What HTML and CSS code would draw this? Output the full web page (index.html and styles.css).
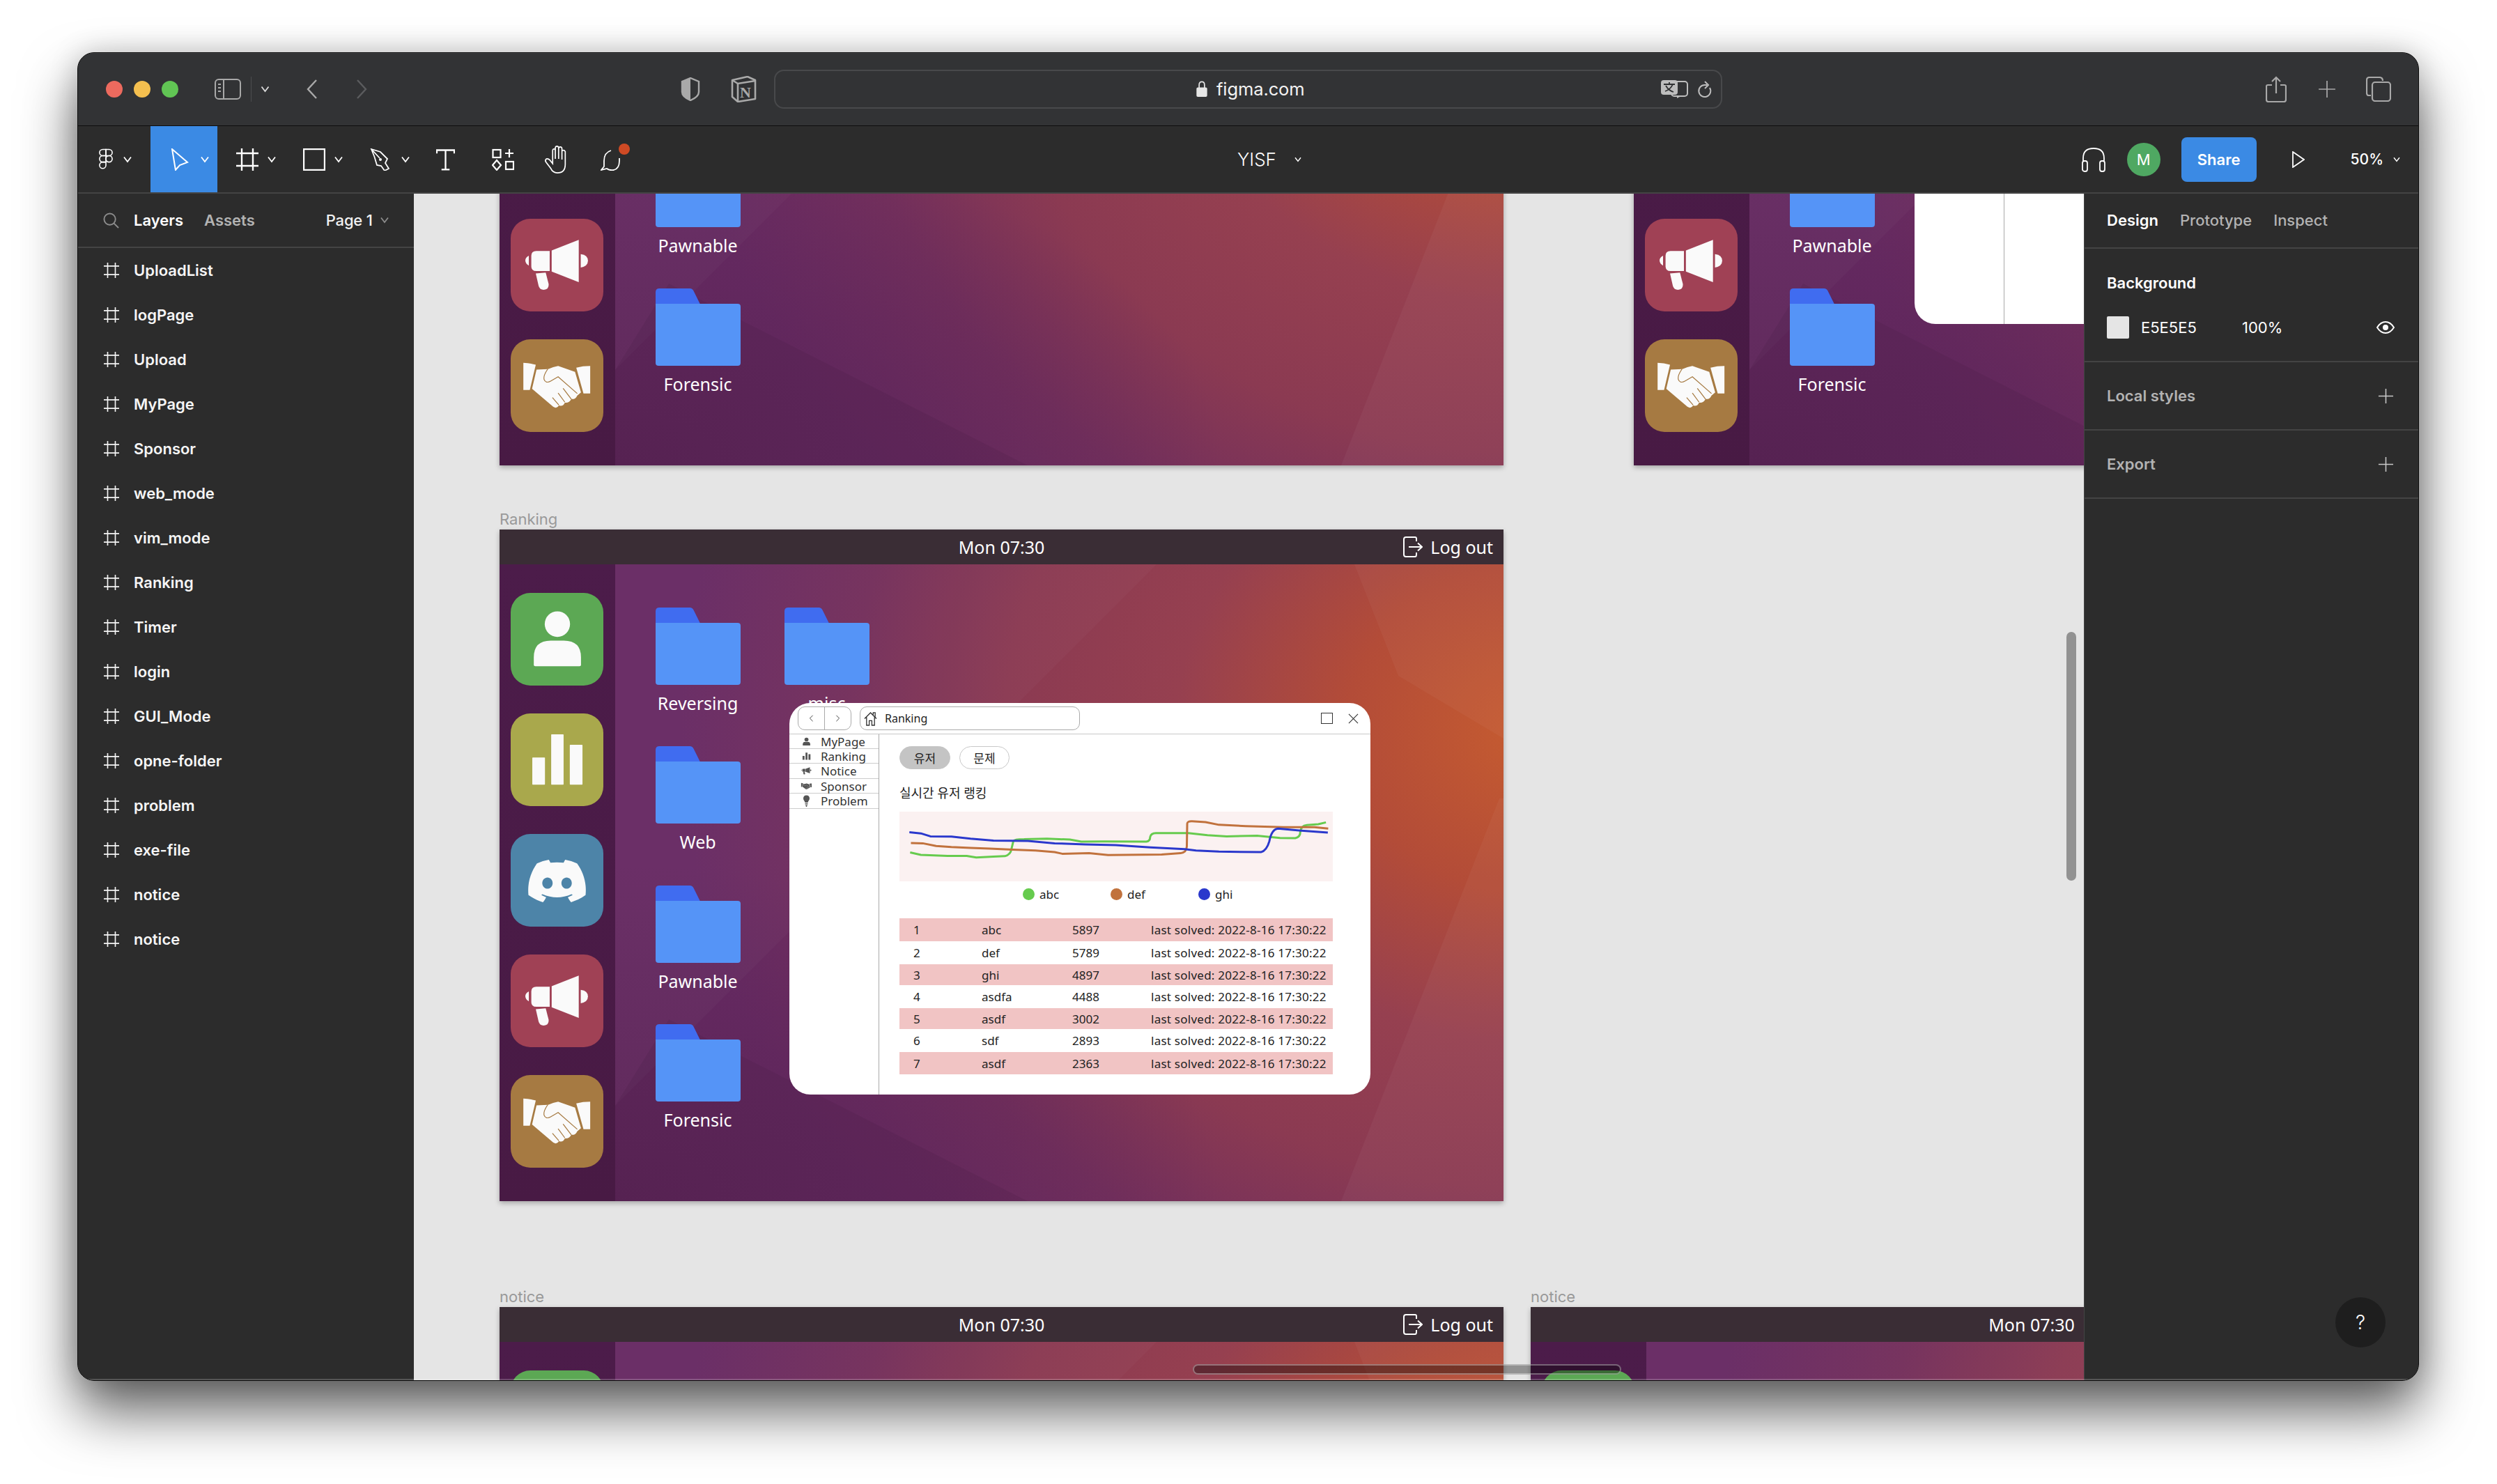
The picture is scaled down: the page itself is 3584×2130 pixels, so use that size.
FILE: index.html
```html
<!DOCTYPE html>
<html lang="en">
<head>
<meta charset="utf-8">
<title>YISF - Figma</title>
<link rel="stylesheet" href="styles.css">
</head>
<body>
<svg class="defs" aria-hidden="true">
  <symbol id="chev" viewBox="0 0 12 10"><path d="M1 1.5 L6 8 L11 1.5" fill="none" stroke="currentColor" stroke-width="1.8"/></symbol>
  <symbol id="frame" viewBox="0 0 32 32"><path d="M8 0V32M24 0V32M0 7H32M0 25H32" fill="none" stroke="currentColor" stroke-width="2.4"/></symbol>
  <symbol id="plus" viewBox="0 0 24 24"><path d="M12 1V23M1 12H23" fill="none" stroke="currentColor" stroke-width="1.6"/></symbol>
  <symbol id="person" viewBox="64 333 373 398" preserveAspectRatio="none"><ellipse cx="252" cy="467" rx="51" ry="55"/><path d="M157 642V610Q157 538 225 538H278Q347 538 347 610V642Q347 648 341 648H163Q157 648 157 642Z"/></symbol>
  <symbol id="bars" viewBox="64 852 373 398" preserveAspectRatio="none"><rect x="151" y="1041" width="51" height="117" rx="2"/><rect x="227" y="942" width="50" height="216" rx="2"/><rect x="302" y="987" width="51" height="171" rx="2"/></symbol>
  <symbol id="discord" viewBox="-7.3 -8.3 38.6 40" preserveAspectRatio="none"><path d="M20.317 4.3698a19.7913 19.7913 0 00-4.8851-1.5152.0741.0741 0 00-.0785.0371c-.211.3753-.4447.8648-.6083 1.2495-1.8447-.2762-3.68-.2762-5.4868 0-.1636-.3933-.4058-.8742-.6177-1.2495a.077.077 0 00-.0785-.037 19.7363 19.7363 0 00-4.8852 1.515.0699.0699 0 00-.0321.0277C.5334 9.0458-.319 13.5799.0992 18.0578a.0824.0824 0 00.0312.0561c2.0528 1.5076 4.0413 2.4228 5.9929 3.0294a.0777.0777 0 00.0842-.0276c.4616-.6304.8731-1.2952 1.226-1.9942a.076.076 0 00-.0416-.1057c-.6528-.2476-1.2743-.5495-1.8722-.8923a.077.077 0 01-.0076-.1277c.1258-.0943.2517-.1923.3718-.2914a.0743.0743 0 01.0776-.0105c3.9278 1.7933 8.18 1.7933 12.0614 0a.0739.0739 0 01.0785.0095c.1202.099.246.1981.3728.2924a.077.077 0 01-.0066.1276 12.2986 12.2986 0 01-1.873.8914.0766.0766 0 00-.0407.1067c.3604.698.7719 1.3628 1.225 1.9932a.076.076 0 00.0842.0286c1.961-.6067 3.9495-1.5219 6.0023-3.0294a.077.077 0 00.0313-.0552c.5004-5.177-.8382-9.6739-3.5485-13.6604a.061.061 0 00-.0312-.0286zM8.02 15.3312c-1.1825 0-2.1569-1.0857-2.1569-2.419 0-1.3332.9555-2.4189 2.157-2.4189 1.2108 0 2.1757 1.0952 2.1568 2.419 0 1.3332-.9555 2.4189-2.1569 2.4189zm7.9748 0c-1.1825 0-2.1569-1.0857-2.1569-2.419 0-1.3332.9554-2.4189 2.1569-2.4189 1.2108 0 2.1757 1.0952 2.1568 2.419 0 1.3332-.946 2.4189-2.1568 2.4189Z"/></symbol>
  <symbol id="horn" viewBox="64 552 373 386" preserveAspectRatio="none"><path d="M229 684L338 640V816L229 772Z"/><path d="M167 686H221V770H167Q147 770 147 750V706Q147 686 167 686Z"/><path d="M137 706Q122 715 123 727Q124 740 137 747Z"/><path d="M346 699Q375 703 375 727Q375 750 346 755Z"/><path d="M165 780L205 776L217 825Q218 847 197 848Q180 848 176 830Z"/></symbol>
  <symbol id="shake" viewBox="64 1054 373 386" preserveAspectRatio="none"><path d="M115 1152Q140 1153 165 1160L141 1265H115Z"/><path d="M384 1165Q355 1165 328 1172L357 1280H384Z"/><path d="M168 1180L150 1260L235 1335Q250 1345 258 1330Q275 1335 282 1318Q300 1320 308 1303Q325 1305 332 1288L347 1275L323 1190L255 1165L235 1170L215 1178Z"/><path d="M213 1178Q195 1205 198 1220Q205 1240 225 1228L255 1210L332 1280M232 1297L258 1328M255 1278L282 1316M275 1258L308 1303" fill="none" stroke="var(--line)" stroke-width="3.5"/></symbol>
  <symbol id="bulb" viewBox="0 0 20 36"><path d="M10 1C4 1 1 5 1 10C1 15 5 17 6 22H14C15 17 19 15 19 10C19 5 16 1 10 1ZM6 24H14V27H6ZM7 29H13L11 34H9Z"/></symbol>
  <symbol id="folder" viewBox="646 396 341 332" preserveAspectRatio="none"><path fill="#406cf0" d="M646 412Q646 396 662 396H783Q794 396 799 408L825 464H646Z"/><path fill="#5594f7" d="M646 462H975Q987 462 987 474V716Q987 728 975 728H658Q646 728 646 716Z"/></symbol>
  <symbol id="logout" viewBox="0 0 28 30"><path d="M17 1H4Q1 1 1 4V26Q1 29 4 29H17Q19 29 19 26V23M19 7V3Q19 1 17 1M8 15H27M21 9.500L27 15L21 20.500" fill="none" stroke="currentColor" stroke-width="2"/></symbol>
  <symbol id="facets" viewBox="0 0 1441 964" preserveAspectRatio="none"><path fill="#fff" fill-opacity=".025" d="M0 50H943L0 993Z"/><path fill="#fff" fill-opacity=".035" d="M1227 50H1441V300L1290 210Z"/><path fill="#fff" fill-opacity=".04" d="M1435 386H1441V964H1208Z"/><path fill="#000" fill-opacity=".05" d="M243 703L758 964H166V827Z"/></symbol>
</svg>

<div class="window">
  <header class="titlebar">
    <span class="light light-red"></span><span class="light light-yellow"></span><span class="light light-green"></span>
    <svg class="tb-sidebar" viewBox="0 0 38 30"><rect x="1" y="1" width="36" height="28" rx="5" fill="none" stroke="#a9a9a9" stroke-width="2"/><path d="M13 1V29" stroke="#a9a9a9" stroke-width="2"/><path d="M5 8H9M5 13H9M5 18H9" stroke="#a9a9a9" stroke-width="1.8"/></svg>
    <span class="tb-sep"></span>
    <svg class="tb-chev"><use href="#chev"/></svg>
    <svg class="tb-back" viewBox="0 0 18 30"><path d="M15 2L3 15L15 28" fill="none" stroke="#a9a9a9" stroke-width="2.4"/></svg>
    <svg class="tb-forward" viewBox="0 0 18 30"><path d="M3 2L15 15L3 28" fill="none" stroke="#5b5c5e" stroke-width="2.4"/></svg>
    <svg class="tb-shield" viewBox="0 0 28 34"><path d="M14 1L26 6V21Q26 28 14 33Q2 28 2 21V6Z" fill="none" stroke="#a9a9a9" stroke-width="2.4"/><path d="M14 1L2 6V21Q2 28 14 33Z" fill="#a9a9a9"/></svg>
    <svg class="tb-notion" viewBox="0 0 38 38"><path d="M3 6L25 1L36 6V33L11 37L3 30Z" fill="#2f3032" stroke="#a9a9a9" stroke-width="2.6" stroke-linejoin="round"/><path d="M3 6L11 11L36 7" fill="none" stroke="#a9a9a9" stroke-width="2.6"/><path d="M11 11V37" stroke="#a9a9a9" stroke-width="2.6"/><text x="14" y="31" class="notion-n">N</text></svg>
    <div class="addressbar">
      <svg class="lock" viewBox="0 0 16 24"><path d="M4 11V6Q4 1.500 8 1.500Q12 1.500 12 6V11" fill="none" stroke="#e6e6e6" stroke-width="1.800"/><rect y="10" width="16" height="14" rx="2" fill="#e6e6e6"/></svg>
      <span class="host">figma.com</span>
      <svg class="translate" viewBox="0 0 40 28"><rect x="16" y="3" width="23" height="21" rx="4" fill="none" stroke="#bdbdbd" stroke-width="2"/><rect x="1" y="1" width="24" height="21" rx="4" fill="#bdbdbd"/><path d="M5 7H21M13 4V7M7 17Q15 14 18 7M8 9Q12 16 19 18" fill="none" stroke="#2f3032" stroke-width="1.800"/><path d="M24 27L30 24H24Z" fill="#bdbdbd"/></svg>
      <svg class="reload" viewBox="0 0 22 26"><path d="M18 11A8.500 8.500 0 1 1 11 7H14" fill="none" stroke="#bdbdbd" stroke-width="2"/><path d="M11 2L16 7L11 12" fill="none" stroke="#bdbdbd" stroke-width="2"/></svg>
    </div>
    <svg class="tb-share" viewBox="0 0 30 38"><path d="M9 13H3Q1 13 1 15V34Q1 37 4 37H26Q29 37 29 34V15Q29 13 27 13H21" fill="none" stroke="#a9a9a9" stroke-width="2.200"/><path d="M15 25V2M9 8L15 2L21 8" fill="none" stroke="#a9a9a9" stroke-width="2.200"/></svg>
    <svg class="tb-plus"><use href="#plus"/></svg>
    <svg class="tb-tabs" viewBox="0 0 36 36"><path d="M7 27H4Q1 27 1 23V5Q1 1 5 1H19Q24 1 24 6" fill="none" stroke="#a9a9a9" stroke-width="2.200"/><rect x="9" y="8" width="26" height="27" rx="4" fill="none" stroke="#a9a9a9" stroke-width="2.200"/></svg>
  </header>

  <nav class="toolbar">
    <div class="tool tool-logo">
      <svg class="ic-logo" viewBox="0 0 22 34"><g fill="none" stroke="#fff" stroke-width="1.800"><path d="M11 1H6A5 5 0 0 0 6 11H11Z"/><path d="M11 1H16A5 5 0 0 1 16 11H11Z"/><path d="M11 11H6A5 5 0 0 0 6 21H11Z"/><circle cx="16" cy="16" r="5"/><path d="M11 21H6A5 5 0 1 0 11 26Z"/></g></svg>
      <svg class="chev"><use href="#chev"/></svg>
    </div>
    <div class="tool tool-move">
      <svg class="ic-arrow" viewBox="0 0 26 32"><path d="M2 1L24 20L13 24L7 31Z" fill="none" stroke="#fff" stroke-width="2"/></svg>
      <svg class="chev"><use href="#chev"/></svg>
    </div>
    <div class="tool tool-menu"><svg class="ic"><use href="#frame"/></svg><svg class="chev"><use href="#chev"/></svg></div>
    <div class="tool tool-menu"><svg class="ic" viewBox="0 0 32 32"><rect x="1" y="1" width="30" height="30" fill="none" stroke="#fff" stroke-width="2.400"/></svg><svg class="chev"><use href="#chev"/></svg></div>
    <div class="tool tool-menu"><svg class="ic" viewBox="0 0 32 32"><path d="M2 1L15 5L25 15L22 21L27 29L21 32L16 25L10 24Q7 12 2 1ZM2 1L14 14" fill="none" stroke="#fff" stroke-width="1.800"/><circle cx="15" cy="16" r="2" fill="#fff"/></svg><svg class="chev"><use href="#chev"/></svg></div>
    <div class="tool tool-plain w78"><svg class="ic-t" viewBox="0 0 28 32"><path d="M1 7V2H27V7M14 2V30M8 31H20" fill="none" stroke="#fff" stroke-width="2.400"/></svg></div>
    <div class="tool tool-plain w88"><svg class="ic" viewBox="0 0 32 32"><g fill="none" stroke="#fff" stroke-width="2.200"><rect x="1.500" y="2" width="11" height="11"/><path d="M25 1V13M19 7H31"/><path d="M7 17L13 24L7 31L1 24Z"/><rect x="20" y="19" width="11" height="11"/></g></svg></div>
    <div class="tool tool-plain w64"><svg class="ic-hand" viewBox="0 0 36 42"><path d="M13 22V8Q13 5 15 5T17 8V20V4Q17 1 19.500 1T22 4V20V5Q22 2 24.500 2T27 5V21V9Q27 7 29 7T32 9V28Q32 41 20 41Q13 41 10 34L3 25Q1 22 3.500 20Q6 19 9 22L13 27Z" fill="none" stroke="#fff" stroke-width="1.800"/></svg></div>
    <div class="tool tool-plain w96 tool-comment"><svg class="ic" viewBox="0 0 32 32"><path d="M15 3Q5 6 5 18V26L1 31L9 29Q13 32 19 31Q27 29 27 18V14" fill="none" stroke="#fff" stroke-width="1.800"/></svg><span class="comment-dot"></span></div>
    <div class="doc-title"><span>YISF</span><svg class="chev-small"><use href="#chev"/></svg></div>
    <div class="tb-right">
      <svg class="ic-phones" viewBox="0 0 36 36"><path d="M3 20V16Q3 2 18 2T33 16V20" fill="none" stroke="#fff" stroke-width="1.800"/><rect x="2" y="20" width="7" height="15" rx="3" fill="none" stroke="#fff" stroke-width="1.800"/><rect x="27" y="20" width="7" height="15" rx="3" fill="none" stroke="#fff" stroke-width="1.800"/></svg>
      <span class="avatar">M</span>
      <span class="share-btn">Share</span>
      <svg class="ic-play" viewBox="0 0 18 24"><path d="M1 1L17 12L1 23Z" fill="none" stroke="#fff" stroke-width="1.800"/></svg>
      <span class="zoom-val">50%</span>
      <svg class="chev-small"><use href="#chev"/></svg>
    </div>
  </nav>

  <div class="main">
    <aside class="left">
      <div class="left-head">
        <svg class="search" viewBox="0 0 24 24"><circle cx="10" cy="10" r="8.500" fill="none" stroke="#8c8c8c" stroke-width="2"/><path d="M16 16L23 23" stroke="#8c8c8c" stroke-width="2"/></svg>
        <span class="tab-on">Layers</span>
        <span class="tab-off">Assets</span>
        <span class="page-name">Page 1</span>
        <svg class="page-chev"><use href="#chev"/></svg>
      </div>
      <ul class="layers">
        <li><svg class="ic-frame"><use href="#frame"/></svg>UploadList</li>
        <li><svg class="ic-frame"><use href="#frame"/></svg>logPage</li>
        <li><svg class="ic-frame"><use href="#frame"/></svg>Upload</li>
        <li><svg class="ic-frame"><use href="#frame"/></svg>MyPage</li>
        <li><svg class="ic-frame"><use href="#frame"/></svg>Sponsor</li>
        <li><svg class="ic-frame"><use href="#frame"/></svg>web_mode</li>
        <li><svg class="ic-frame"><use href="#frame"/></svg>vim_mode</li>
        <li><svg class="ic-frame"><use href="#frame"/></svg>Ranking</li>
        <li><svg class="ic-frame"><use href="#frame"/></svg>Timer</li>
        <li><svg class="ic-frame"><use href="#frame"/></svg>login</li>
        <li><svg class="ic-frame"><use href="#frame"/></svg>GUI_Mode</li>
        <li><svg class="ic-frame"><use href="#frame"/></svg>opne-folder</li>
        <li><svg class="ic-frame"><use href="#frame"/></svg>problem</li>
        <li><svg class="ic-frame"><use href="#frame"/></svg>exe-file</li>
        <li><svg class="ic-frame"><use href="#frame"/></svg>notice</li>
        <li><svg class="ic-frame"><use href="#frame"/></svg>notice</li>
      </ul>
    </aside>

    <section class="canvas">
      <!-- frame: top left, only its lower part is in view -->
      <article class="frame frame-a">
        <svg class="facets"><use href="#facets"/></svg>
        <div class="topbar"></div>
        <div class="desk">
          <div class="dock">
            <span class="tile tile-green"><svg><use href="#person"/></svg></span>
            <span class="tile tile-olive"><svg><use href="#bars"/></svg></span>
            <span class="tile tile-blue"><svg><use href="#discord"/></svg></span>
            <span class="tile tile-red"><svg><use href="#horn"/></svg></span>
            <span class="tile tile-brown"><svg><use href="#shake"/></svg></span>
          </div>
          <div class="folders">
            <div class="folder"></div>
            <div class="folder"></div>
            <div class="folder"><svg><use href="#folder"/></svg><span>Pawnable</span></div>
            <div class="folder"><svg><use href="#folder"/></svg><span>Forensic</span></div>
          </div>
        </div>
      </article>

      <!-- frame: top right, only its lower part is in view -->
      <article class="frame frame-b">
        <svg class="facets"><use href="#facets"/></svg>
        <div class="topbar"></div>
        <div class="desk">
          <div class="dock">
            <span class="tile tile-green"><svg><use href="#person"/></svg></span>
            <span class="tile tile-olive"><svg><use href="#bars"/></svg></span>
            <span class="tile tile-blue"><svg><use href="#discord"/></svg></span>
            <span class="tile tile-red"><svg><use href="#horn"/></svg></span>
            <span class="tile tile-brown"><svg><use href="#shake"/></svg></span>
          </div>
          <div class="folders">
            <div class="folder"></div>
            <div class="folder"></div>
            <div class="folder"><svg><use href="#folder"/></svg><span>Pawnable</span></div>
            <div class="folder"><svg><use href="#folder"/></svg><span>Forensic</span></div>
          </div>
        </div>
        <div class="blank-modal"><span class="blank-line"></span></div>
      </article>

      <!-- frame: Ranking -->
      <article class="frame frame-r">
        <span class="frame-label">Ranking</span>
        <svg class="facets"><use href="#facets"/></svg>
        <div class="topbar"><span class="clock">Mon 07:30</span><span class="logout"><svg><use href="#logout"/></svg>Log out</span></div>
        <div class="desk">
          <div class="dock">
            <span class="tile tile-green"><svg><use href="#person"/></svg></span>
            <span class="tile tile-olive"><svg><use href="#bars"/></svg></span>
            <span class="tile tile-blue"><svg><use href="#discord"/></svg></span>
            <span class="tile tile-red"><svg><use href="#horn"/></svg></span>
            <span class="tile tile-brown"><svg><use href="#shake"/></svg></span>
          </div>
          <div class="folders">
            <div class="folder"><svg><use href="#folder"/></svg><span>Reversing</span></div>
            <div class="folder"><svg><use href="#folder"/></svg><span>Web</span></div>
            <div class="folder"><svg><use href="#folder"/></svg><span>Pawnable</span></div>
            <div class="folder"><svg><use href="#folder"/></svg><span>Forensic</span></div>
            <div class="folder"><svg><use href="#folder"/></svg><span>misc</span></div>
          </div>
        </div>

        <div class="modal">
          <div class="modal-head">
            <div class="nav-btns">
              <span class="nav-btn"><svg viewBox="0 0 10 16"><path d="M8 2L2 8L8 14" fill="none" stroke="#333" stroke-width="1.300"/></svg></span>
              <span class="nav-btn"><svg viewBox="0 0 10 16"><path d="M2 2L8 8L2 14" fill="none" stroke="#333" stroke-width="1.300"/></svg></span>
            </div>
            <div class="addr">
              <svg class="home" viewBox="0 0 20 22"><path d="M1 11L10 2L19 11M4 9V21H8V14H12V21H16V9M14 5V2H17V8" fill="none" stroke="#333" stroke-width="1.400"/></svg>
              <span>Ranking</span>
            </div>
            <span class="win-max"></span>
            <svg class="win-close" viewBox="0 0 16 16"><path d="M1 1L15 15M15 1L1 15" stroke="#333" stroke-width="1.200"/></svg>
          </div>
          <div class="modal-body">
            <ul class="side">
              <li class="side-a"><svg><use href="#person"/></svg>MyPage</li>
              <li class="side-b"><svg><use href="#bars"/></svg>Ranking</li>
              <li class="side-c"><svg><use href="#horn"/></svg>Notice</li>
              <li class="side-b"><svg><use href="#shake"/></svg>Sponsor</li>
              <li class="side-c"><svg class="bulb"><use href="#bulb"/></svg>Problem</li>
            </ul>
            <div class="content">
              <div class="pills"><span class="pill pill-on">유저</span><span class="pill">문제</span></div>
              <h2 class="chart-title">실시간 유저 랭킹</h2>
              <svg class="chart" viewBox="294 430 1134 260" preserveAspectRatio="none">
                <path class="line" stroke="#66cb4e" d="M322 582L350 591L420 595L470 595L495 601L540 598L570 596Q585 590 587 570L592 540Q595 533 620 533L680 531L740 534L770 542L830 541L940 542Q950 540 950 525Q952 510 965 510L1050 510L1100 518L1150 522L1230 520L1290 528L1330 529Q1343 525 1343 505Q1345 482 1360 480L1390 477L1410 470"/>
                <path class="line" stroke="#c1723d" d="M324 547L355 548L390 558L430 562L480 565L530 568L590 572L650 575L700 581L720 587L790 585L840 592L980 590L1030 585Q1045 582 1046 560L1047 475Q1047 465 1060 466L1095 469L1130 479L1200 484L1300 488L1380 488L1416 493"/>
                <path class="line" stroke="#2a38cc" d="M320 507L350 511L375 522L430 523L480 531L540 538L630 539L700 548L780 552L860 555L950 563L1040 570L1070 575L1130 579L1240 581Q1255 575 1262 540Q1268 495 1285 493L1340 500L1415 508"/>
              </svg>
              <div class="legend">
                <span class="key"><i class="dot dot-g"></i>abc</span>
                <span class="key"><i class="dot dot-o"></i>def</span>
                <span class="key"><i class="dot dot-b"></i>ghi</span>
              </div>
              <div class="table">
                <div class="row row-pink h33"><span>1</span><span>abc</span><span>5897</span><span class="solved">last solved: 2022-8-16 17:30:22</span></div>
                <div class="row h33"><span>2</span><span>def</span><span>5789</span><span class="solved">last solved: 2022-8-16 17:30:22</span></div>
                <div class="row row-pink h30"><span>3</span><span>ghi</span><span>4897</span><span class="solved">last solved: 2022-8-16 17:30:22</span></div>
                <div class="row h33"><span>4</span><span>asdfa</span><span>4488</span><span class="solved">last solved: 2022-8-16 17:30:22</span></div>
                <div class="row row-pink h30"><span>5</span><span>asdf</span><span>3002</span><span class="solved">last solved: 2022-8-16 17:30:22</span></div>
                <div class="row h33"><span>6</span><span>sdf</span><span>2893</span><span class="solved">last solved: 2022-8-16 17:30:22</span></div>
                <div class="row row-pink h32"><span>7</span><span>asdf</span><span>2363</span><span class="solved">last solved: 2022-8-16 17:30:22</span></div>
              </div>
            </div>
          </div>
        </div>
      </article>

      <!-- frames: notice -->
      <article class="frame frame-n1">
        <span class="frame-label">notice</span>
        <svg class="facets"><use href="#facets"/></svg>
        <div class="topbar"><span class="clock">Mon 07:30</span><span class="logout"><svg><use href="#logout"/></svg>Log out</span></div>
        <div class="desk"><div class="dock"><span class="tile tile-green"></span></div></div>
      </article>
      <article class="frame frame-n2">
        <span class="frame-label">notice</span>
        <svg class="facets"><use href="#facets"/></svg>
        <div class="topbar"><span class="clock">Mon 07:30</span></div>
        <div class="desk"><div class="dock"><span class="tile tile-green"></span></div></div>
      </article>

      <span class="scroll-v"></span>
      <span class="scroll-h"></span>
    </section>

    <aside class="right">
      <div class="right-head"><span class="tab-on">Design</span><span class="tab-off">Prototype</span><span class="tab-off">Inspect</span></div>
      <div class="bg-section">
        <h3 class="sec-title">Background</h3>
        <div class="bg-row">
          <span class="swatch"></span><span class="hex">E5E5E5</span><span class="pct">100%</span>
          <svg class="eye" viewBox="0 0 26 18"><path d="M1 9Q6 1 13 1T25 9Q20 17 13 17T1 9Z" fill="none" stroke="#fff" stroke-width="2"/><circle cx="13" cy="9" r="4" fill="#fff"/></svg>
        </div>
      </div>
      <div class="sec-row"><span>Local styles</span><svg><use href="#plus"/></svg></div>
      <div class="sec-row"><span>Export</span><svg><use href="#plus"/></svg></div>
      <span class="help">?</span>
    </aside>
  </div>
</div>
</body>
</html>
```

FILE: styles.css
```css
* { box-sizing: border-box; }
html, body { margin: 0; padding: 0; }
body {
  width: 3584px;
  height: 2130px;
  padding: 75px 112px 0 111px;
  background: #fff;
  overflow: hidden;
  font-family: Inter, "Liberation Sans", sans-serif;
}
.defs { position: absolute; width: 0; height: 0; }
ul { list-style: none; margin: 0; padding: 0; }
h2, h3 { margin: 0; font-weight: inherit; font-size: inherit; }

.window {
  position: relative;
  width: 3361px;
  height: 1907px;
  border: 1px solid #0c0c0c;
  border-radius: 24px;
  background: #2c2c2c;
  overflow: hidden;
}
body::before {
  content: "";
  position: absolute;
  left: 111px;
  top: 75px;
  width: 3361px;
  height: 1907px;
  border-radius: 24px;
  box-shadow: 0 44px 80px rgba(0, 0, 0, .62), 0 0 40px rgba(0, 0, 0, .18);
}
.window::after {
  content: "";
  position: absolute;
  left: 0;
  right: 0;
  bottom: 0;
  height: 2px;
  background: rgba(255, 255, 255, .2);
}

/* title bar */
.titlebar {
  height: 105px;
  display: flex;
  align-items: center;
  background: #323335;
  border-top: 1px solid #3e3f41;
  border-bottom: 1px solid #0d0d0d;
  padding: 0 0 2px 40px;
}
.light { width: 24px; height: 24px; border-radius: 50%; margin-right: 16px; }
.light-red { background: #ec6a5e; }
.light-yellow { background: #f4bf4f; }
.light-green { background: #61c554; }
.tb-sidebar { width: 38px; height: 30px; margin-left: 36px; }
.tb-sep { width: 1px; height: 36px; background: #4b4c4e; margin-left: 14px; }
.tb-chev { width: 13px; height: 10px; margin-left: 13px; color: #dcdcdc; }
.tb-back { width: 18px; height: 30px; margin-left: 52px; }
.tb-forward { width: 18px; height: 30px; margin-left: 53px; }
.tb-shield { width: 28px; height: 34px; margin-left: 449px; }
.tb-notion { width: 38px; height: 38px; margin-left: 43px; }
.notion-n { font: bold 22px "Liberation Serif", serif; fill: #a9a9a9; }
.addressbar {
  position: relative;
  width: 1361px;
  height: 56px;
  margin-left: 25px;
  border: 2px solid #48494b;
  border-radius: 14px;
  display: flex;
  align-items: center;
  padding-left: 604px;
  color: #f2f2f2;
}
.lock { width: 16px; height: 23px; }
.host { margin-left: 13px; font-size: 25.500px; letter-spacing: -.1px; line-height: 1; }
.translate { width: 40px; height: 28px; margin-left: 510px; }
.reload { width: 22px; height: 26px; margin-left: 13px; }
.tb-share { width: 30px; height: 38px; margin-left: 780px; }
.tb-plus { width: 26px; height: 26px; margin-left: 45px; color: #a9a9a9; }
.tb-tabs { width: 36px; height: 36px; margin-left: 43px; }

/* toolbar */
.toolbar {
  height: 97px;
  display: flex;
  align-items: stretch;
  background: #2c2c2c;
  border-bottom: 2px solid #444;
  color: #fff;
}
.tool { display: flex; align-items: center; color: #fff; }
.tool-logo { width: 104px; padding-left: 30px; gap: 15px; }
.tool-move { width: 96px; padding-left: 29px; gap: 17px; background: #3b8ae4; }
.tool-menu { width: 96px; padding-left: 27px; gap: 13px; }
.tool-plain { justify-content: center; }
.w78 { width: 78px; }
.w88 { width: 88px; }
.w64 { width: 64px; }
.w96 { width: 96px; }
.tool-comment { position: relative; }
.comment-dot {
  position: absolute;
  left: 58px;
  top: 25px;
  width: 16px;
  height: 16px;
  border-radius: 50%;
  background: #cf4a24;
}
.ic { width: 32px; height: 32px; }
.chev { width: 12px; height: 10px; }
.chev-small { width: 10px; height: 8px; }
.ic-logo { width: 20px; height: 32px; }
.ic-arrow { width: 26px; height: 32px; }
.ic-t { width: 27px; height: 32px; }
.ic-hand { width: 36px; height: 40px; }
.doc-title {
  display: flex;
  align-items: center;
  gap: 26px;
  margin-left: 850px;
  font-size: 26px;
  font-weight: 300;
}
.tb-right { display: flex; align-items: center; margin-left: auto; padding-right: 26px; }
.ic-phones { width: 36px; height: 36px; }
.avatar {
  width: 48px;
  height: 48px;
  margin-left: 30px;
  border-radius: 50%;
  background: #4fa862;
  display: flex;
  align-items: center;
  justify-content: center;
  font-size: 22px;
}
.share-btn {
  width: 108px;
  height: 64px;
  margin-left: 30px;
  border-radius: 8px;
  background: #3b8ae4;
  display: flex;
  align-items: center;
  justify-content: center;
  font-size: 22px;
  font-weight: 600;
}
.ic-play { width: 18px; height: 24px; margin-left: 51px; }
.zoom-val { margin-left: 66px; font-size: 21px; font-weight: 500; }
.tb-right .chev-small { margin-left: 14px; }

/* main */
.main { display: flex; height: 1703px; }

.left { width: 482px; flex: none; background: #2c2c2c; color: #fff; }
.left-head {
  height: 78px;
  border-bottom: 2px solid #444;
  display: flex;
  align-items: center;
  padding-left: 36px;
  font-size: 22px;
  font-weight: 600;
  position: relative;
}
.search { width: 23px; height: 23px; }
.left-head .tab-on { margin-left: 21px; }
.left-head .tab-off { margin-left: 30px; }
.tab-on { color: #fff; font-weight: 600; }
.tab-off { color: #b3b3b3; font-weight: 600; }
.page-name { margin-left: 102px; font-weight: 500; color: #f2f2f2; letter-spacing: -.2px; }
.page-chev { width: 12px; height: 10px; margin-left: 11px; color: #8c8c8c; }
.layers li {
  height: 64px;
  display: flex;
  align-items: center;
  padding-left: 37px;
  font-size: 22px;
  font-weight: 600;
  color: #f5f5f5;
}
.ic-frame { width: 22px; height: 22px; margin-right: 21px; }

.canvas {
  position: relative;
  flex: 1;
  background: #e5e5e5;
  overflow: hidden;
}

/* frames on the canvas */
.frame {
  position: absolute;
  width: 1441px;
  height: 964px;
  box-shadow: 0 3px 7px rgba(0, 0, 0, .28);
  background:
    radial-gradient(60% 50% at 12% 100%, #5b2457 0%, rgba(91, 36, 87, 0) 100%),
    radial-gradient(85% 110% at 103% 30%, #c65c30 0%, #b34c38 22%, #964050 42%, #8b3a52 62%, #74305c 80%, #682b64 100%);
}
.facets { position: absolute; left: 0; top: 0; width: 100%; height: 100%; }
.frame-a { left: 123px; top: -574px; }
.frame-b { left: 1751px; top: -574px; }
.frame-r { left: 123px; top: 482px; }
.frame-n1 { left: 123px; top: 1598px; }
.frame-n2 { left: 1603px; top: 1598px; width: 1438px; }
.frame-label {
  position: absolute;
  left: 0;
  top: -28px;
  line-height: 26px;
  font-size: 22px;
  color: #999;
}
.topbar {
  position: relative;
  height: 50px;
  background: #3a2d35;
  color: #fff;
  display: flex;
  align-items: center;
  justify-content: center;
  font-family: "Noto Sans", sans-serif;
  font-size: 25px;
}
.logout {
  position: absolute;
  right: 15px;
  top: 10px;
  display: flex;
  align-items: center;
  gap: 11px;
  line-height: 30px;
}
.logout svg { width: 28px; height: 30px; }
.desk { position: relative; display: flex; height: 914px; }
.dock {
  width: 166px;
  flex: none;
  height: 100%;
  padding: 41px 16px 0;
  display: flex;
  flex-direction: column;
  gap: 40px;
  background: linear-gradient(180deg, #4c1c4a 0%, #481a44 100%);
}
.tile { display: block; width: 133px; height: 133px; border-radius: 28px; color: #fafafa; fill: #fafafa; }
.tile svg { display: block; width: 100%; height: 100%; }
.tile-green { background: #5ca854; }
.tile-olive { background: #a9a84c; }
.tile-blue { background: #4d84a8; }
.tile-red { background: #a04155; }
.tile-brown { background: #a67a42; --line: #a67a42; }
.folders {
  padding: 62px 0 0 26px;
  display: grid;
  grid-template-rows: repeat(4, 199.400px);
  grid-template-columns: 185px 185px;
  grid-auto-flow: column;
}
.folder {
  display: flex;
  flex-direction: column;
  align-items: center;
  font-family: "Noto Sans", sans-serif;
  font-size: 25px;
  line-height: 34px;
  color: #fff;
}
.folder svg { width: 122px; height: 111px; margin-bottom: 9px; }
.blank-modal {
  position: absolute;
  left: 403px;
  top: 249px;
  width: 1000px;
  height: 512px;
  border-radius: 30px;
  background: #fff;
}
.blank-line { position: absolute; left: 128px; top: 0; bottom: 0; width: 1px; background: #aaa; }

/* modal */
.modal {
  position: absolute;
  left: 416px;
  top: 249px;
  width: 834px;
  height: 562px;
  border-radius: 30px;
  background: #fff;
  overflow: hidden;
  font-family: "Noto Sans", "Noto Sans CJK KR", sans-serif;
  color: #222;
}
.modal-head {
  height: 45px;
  display: flex;
  align-items: center;
  border-bottom: 1px solid #c8c8c8;
  padding: 0 17px 0 12px;
}
.nav-btns {
  width: 77px;
  height: 34px;
  display: flex;
  border: 1px solid #aaa;
  border-radius: 10px;
}
.nav-btn {
  flex: 1;
  display: flex;
  align-items: center;
  justify-content: center;
}
.nav-btn + .nav-btn { border-left: 1px solid #aaa; }
.nav-btn svg { width: 7px; height: 12px; }
.addr {
  width: 316px;
  height: 34px;
  margin-left: 12px;
  border: 1px solid #aaa;
  border-radius: 10px;
  display: flex;
  align-items: center;
  padding-left: 5px;
  font-size: 16px;
}
.home { width: 19px; height: 21px; margin-right: 11px; }
.win-max { width: 17px; height: 16px; margin-left: auto; border: 1px solid #333; }
.win-close { width: 15px; height: 15px; margin-left: 22px; }

.modal-body { display: flex; height: 517px; }
.side { width: 129px; flex: none; border-right: 1px solid #aaa; font-size: 17px; color: #333; }
.side li {
  display: flex;
  align-items: center;
  padding-left: 14px;
  border-bottom: 1px solid #ccc;
  fill: #555;
  --line: #fff;
}
.side svg { width: 21px; height: 19px; margin-right: 10px; flex: none; }
.side .bulb { width: 13px; height: 18px; margin: 0 14px 0 4px; }
.side-a { height: 21px; }
.side-b { height: 21px; }
.side-c { height: 22px; }

.content { flex: 1; padding: 17px 0 0 29px; }
.pills { display: flex; gap: 13px; }
.pill {
  width: 72px;
  height: 33px;
  border: 1px solid #c8c8c8;
  border-radius: 17px;
  display: flex;
  align-items: center;
  justify-content: center;
  font-size: 17px;
}
.pill-on { width: 73px; background: #c4c4c4; border-color: #c4c4c4; }
.chart-title { margin-top: 22px; font-size: 18px; line-height: 24px; }
.chart { display: block; width: 622px; height: 100px; margin-top: 15px; background: #fbf1f1; }
.line { fill: none; stroke-width: 3; vector-effect: non-scaling-stroke; stroke-linejoin: round; }
.legend {
  display: flex;
  height: 20px;
  margin-top: 8px;
  padding-left: 177px;
  font-size: 17px;
}
.key { width: 126px; display: flex; align-items: center; gap: 7px; }
.dot { width: 17px; height: 17px; border-radius: 50%; }
.dot-g { background: #66cb4e; }
.dot-o { background: #c1723d; }
.dot-b { background: #2a38cc; }
.table { width: 622px; margin-top: 25px; font-size: 17px; }
.row {
  display: grid;
  grid-template-columns: 98px 130px 113px 1fr;
  align-items: center;
  padding-left: 20px;
}
.solved { letter-spacing: .25px; white-space: nowrap; }
.row-pink { background: #f1c4c4; }
.h33 { height: 33px; }
.h30 { height: 30px; }
.h32 { height: 32px; }

/* right panel */
.right {
  position: relative;
  flex: none;
  width: 480px;
  background: #2c2c2c;
  border-left: 1px solid #444;
  color: #fff;
  font-size: 22px;
}
.right-head {
  height: 79px;
  border-bottom: 2px solid #444;
  display: flex;
  align-items: center;
  padding: 0 0 2px 32px;
  gap: 31px;
}
.right-head .tab-off { font-weight: 500; }
.bg-section {
  height: 163px;
  border-bottom: 2px solid #444;
  padding: 37px 32px 0;
}
.sec-title { font-weight: 600; line-height: 24px; }
.bg-row {
  display: flex;
  align-items: center;
  height: 32px;
  margin-top: 36px;
  font-size: 22px;
}
.swatch { width: 32px; height: 32px; background: #e5e5e5; border-radius: 2px; }
.hex { margin-left: 17px; width: 145px; }
.eye { width: 26px; height: 18px; margin-left: auto; margin-right: 2px; }
.sec-row {
  height: 98px;
  border-bottom: 2px solid #444;
  display: flex;
  align-items: center;
  justify-content: space-between;
  padding: 0 35px 0 32px;
  color: #b3b3b3;
  font-weight: 600;
}
.sec-row svg { width: 23px; height: 23px; color: #c8c8c8; }
.help {
  position: absolute;
  left: 360px;
  top: 1584px;
  width: 72px;
  height: 72px;
  border-radius: 50%;
  background: #1e1e1e;
  display: flex;
  align-items: center;
  justify-content: center;
  font-size: 28px;
  font-weight: 300;
}

/* scrollbars */
.scroll-v {
  position: absolute;
  right: 11px;
  top: 629px;
  width: 14px;
  height: 357px;
  border-radius: 7px;
  background: rgba(0, 0, 0, .36);
}
.scroll-h {
  position: absolute;
  left: 1118px;
  top: 1680px;
  width: 615px;
  height: 15px;
  border-radius: 8px;
  border: 2px solid rgba(255, 255, 255, .35);
  background: rgba(0, 0, 0, .36);
}
```
